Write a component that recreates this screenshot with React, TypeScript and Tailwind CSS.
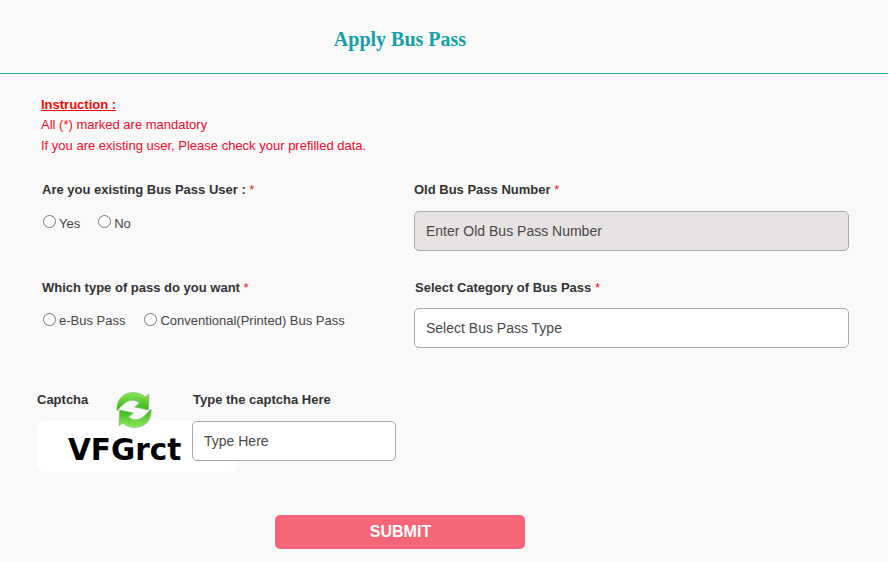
import React from "react";

const labelClass = "text-[13px] font-bold leading-4 text-[#333]";
const fieldClass =
  "block h-10 w-full rounded-[5px] border border-[#a9a9a9] px-[11px] text-[14px] text-[#484848] placeholder:text-[#484848] outline-none";
const radioClass = "m-0 mb-[3px] h-[13px] w-[13px]";

function Required() {
  return <span className="font-normal text-[#e02020]"> *</span>;
}

function RefreshIcon() {
  return (
    <svg viewBox="0 0 38 38" className="absolute left-[78px] top-[-1px] h-[38px] w-[38px]">
      <defs>
        <linearGradient id="g1" x1="0" y1="0" x2="0" y2="1">
          <stop offset="0" stopColor="#86e654" />
          <stop offset="1" stopColor="#33b414" />
        </linearGradient>
        <linearGradient id="g2" x1="0" y1="0" x2="0" y2="1">
          <stop offset="0" stopColor="#35b516" />
          <stop offset="1" stopColor="#8ee85c" />
        </linearGradient>
      </defs>
      <path
        d="M2 20C1 9 8 1.500 18 1.500c5 0 9 1.500 12 4.500l4-3-.5 16-14-3 5-4c-3-2.500-7-3.500-11-2-4 1.500-7 5-11.500 10z"
        fill="url(#g1)"
        stroke="#8ab87a"
        strokeWidth="0.6"
      />
      <path
        d="M36 18c1 11-6 18.500-16 18.500-5 0-9-1.500-12-4.500l-4 3 .5-16 14 3-5 4c3 2.500 7 3.500 11 2 4-1.500 7-5 11.500-10z"
        fill="url(#g2)"
        stroke="#8ab87a"
        strokeWidth="0.6"
      />
    </svg>
  );
}

export default function App() {
  return (
    <div className="min-h-[562px] bg-[#f9f9f9] font-['Liberation_Sans',Arial,sans-serif]">
      <header className="flex h-[73px] items-center justify-center pr-[88px] pt-[5px]">
        <h1 className="font-['Liberation_Serif',serif] text-[20px] font-bold text-[#14a0a5]">
          Apply Bus Pass
        </h1>
      </header>
      <div className="h-px bg-[#1fb0b5]" />

      <div className="pl-[41px] pt-[21px] text-[13px] leading-[20.5px] text-[#f5092b]">
        <p className="font-bold text-[#f50a0a] underline">Instruction :</p>
        <p className="-mt-[1px]">All (*) marked are mandatory</p>
        <p className="mt-[1px]">If you are existing user, Please check your prefilled data.</p>
      </div>

      <div className="mt-[20px] grid grid-cols-[372px_435px] pl-[42px]">
        <div className="h-[98px]">
          <label className={labelClass}>
            Are you existing Bus Pass User :<Required />
          </label>
          <div className="mt-[13px] flex items-center pl-[1px] text-[13px] leading-4 text-[#444]">
            <input type="radio" name="existing" className={`${radioClass} mr-[3px]`} />
            <span className="mt-[2px]">Yes</span>
            <input type="radio" name="existing" className={`${radioClass} ml-[18px] mr-[3px]`} />
            <span className="mt-[2px]">No</span>
          </div>
        </div>
        <div className="h-[98px]">
          <label className={labelClass}>
            Old Bus Pass Number<Required />
          </label>
          <input placeholder="Enter Old Bus Pass Number" disabled className={`${fieldClass} mt-[10px] bg-[#e6e3e2]`} />
        </div>

        <div>
          <label className={labelClass}>
            Which type of pass do you want<Required />
          </label>
          <div className="mt-[14px] flex items-center pl-[1px] text-[13px] leading-4 text-[#444]">
            <input type="radio" name="kind" className={`${radioClass} mr-[3px]`} />
            <span>e-Bus Pass</span>
            <input type="radio" name="kind" className={`${radioClass} ml-[19px] mr-[3px]`} />
            <span>Conventional(Printed) Bus Pass</span>
          </div>
        </div>
        <div>
          <label className={`${labelClass} ml-[1px]`}>
            Select Category of Bus Pass<Required />
          </label>
          <div className={`${fieldClass} mt-[9px] flex items-center bg-white pt-[2px]`}>Select Bus Pass Type</div>
        </div>
      </div>

      <div className="mt-[44px] flex pl-[37px]">
        <div className="relative w-[155px]">
          <label className={`${labelClass} block`}>Captcha</label>
          <RefreshIcon />
          <div className="mt-[13px] flex h-[51px] w-[200px] items-end rounded-lg bg-white pb-[4px] pl-[31px] font-['DejaVu_Sans',sans-serif] text-[29.5px] font-bold leading-[36px] text-black">
            VFGrct
          </div>
        </div>
        <div className="relative w-[204px]">
          <label className={`${labelClass} ml-[1px] block`}>Type the captcha Here</label>
          <input placeholder="Type Here" className={`${fieldClass} mt-[13px] bg-white`} />
        </div>
      </div>

      <div className="mt-[43px] flex pl-[275px]">
        <button className="h-[34px] w-[250px] rounded-[5px] bg-[#f66578] pl-[1px] text-[16px] font-bold text-white">
          SUBMIT
        </button>
      </div>
    </div>
  );
}
